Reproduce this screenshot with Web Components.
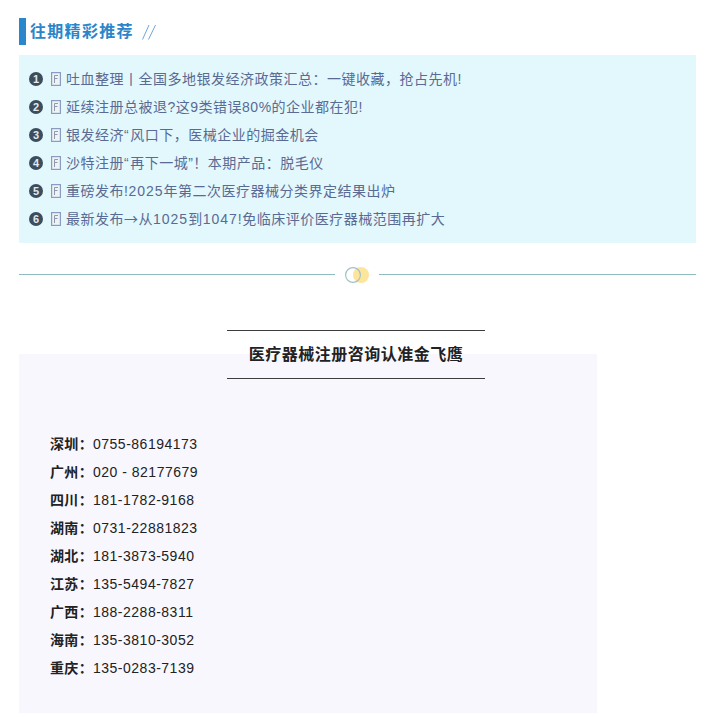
<!DOCTYPE html>
<html lang="zh">
<head>
<meta charset="utf-8">
<style>
  html, body { margin: 0; background: #fff; }
  body { font-family: "Liberation Sans", "Noto Sans CJK SC", sans-serif; }
  .arrow { font-family: "Noto Sans CJK SC", sans-serif; }
  .digits { letter-spacing: 1px; }
  .quote { letter-spacing: 1.5px; }
</style>
</head>
<body>
<page-root>
  <section-head>往期精彩推荐</section-head>
  <article-list>
    <article-row num="1">吐血整理丨全国多地银发经济政策汇总：一键收藏，抢占先机!</article-row>
    <article-row num="2">延续注册总被退?这9类错误80%的企业都在犯!</article-row>
    <article-row num="3">银发经济<span class="quote">“</span>风口下，医械企业的掘金机会</article-row>
    <article-row num="4">沙特注册<span class="quote">“</span>再下一城”！本期产品：脱毛仪</article-row>
    <article-row num="5">重磅发布!<span class="digits">2025</span>年第二次医疗器械分类界定结果出炉</article-row>
    <article-row num="6">最新发布<span class="arrow">→</span>从<span class="digits">1025</span>到<span class="digits">1047</span>!免临床评价医疗器械范围再扩大</article-row>
  </article-list>
  <ring-divider></ring-divider>
  <contact-title>医疗器械注册咨询认准金飞鹰</contact-title>
  <contact-card>
    <phone-row label="深圳">0755-86194173</phone-row>
    <phone-row label="广州">020 - 82177679</phone-row>
    <phone-row label="四川">181-1782-9168</phone-row>
    <phone-row label="湖南">0731-22881823</phone-row>
    <phone-row label="湖北">181-3873-5940</phone-row>
    <phone-row label="江苏">135-5494-7827</phone-row>
    <phone-row label="广西">188-2288-8311</phone-row>
    <phone-row label="海南">135-3810-3052</phone-row>
    <phone-row label="重庆">135-0283-7139</phone-row>
  </contact-card>
</page-root>
<script>
function shadow(el, html) {
  el.attachShadow({ mode: 'open' }).innerHTML = html
}

class PageRoot extends HTMLElement {
  constructor() {
    super()
    shadow(this, `<style>
      :host { display: block; width: 677px; height: 717px; padding: 18px 14px 0 19px; overflow: hidden; box-sizing: content-box; }
    </style><slot></slot>`)
  }
}

class SectionHead extends HTMLElement {
  constructor() {
    super()
    shadow(this, `<style>
      :host { display: flex; align-items: center; height: 27px; }
      .bar { width: 7px; height: 27px; background: #2b87cb; margin-right: 4px; }
      .title { font-size: 16px; font-weight: bold; color: #2b85c9; letter-spacing: 1.3px; padding-bottom: 4px; }
      svg { margin-left: 8px; display: block; }
    </style>
    <div class="bar"></div>
    <div class="title"><slot></slot></div>
    <svg width="14" height="16" viewBox="0 0 14 16" fill="none" stroke="#6ea6d8" stroke-width="1">
      <path d="M0.5 15.5 L7 1"/><path d="M6.5 15.5 L13.5 1"/>
    </svg>`)
  }
}

class ArticleList extends HTMLElement {
  constructor() {
    super()
    shadow(this, `<style>
      :host { display: block; margin-top: 10px; padding: 10px 0 10px 10px; background: #e3f8fc; }
    </style><slot></slot>`)
  }
}

class ArticleRow extends HTMLElement {
  constructor() {
    super()
    const num = this.getAttribute('num')
    shadow(this, `<style>
      :host { display: flex; align-items: center; height: 28px; color: #596a94; font-size: 14px; letter-spacing: 0.5px; }
      .num { width: 14px; height: 14px; border-radius: 50%; background: #3c4e5e; color: #e3e9ee; font-size: 11px; font-weight: bold; line-height: 14px; text-align: center; letter-spacing: 0; margin-right: 8px; }
      svg { display: block; margin-right: 5px; }
      .text { padding-bottom: 2px; }
    </style>
    <div class="num">${num}</div>
    <svg width="10" height="14" viewBox="0 0 10 14" fill="none">
      <rect x="0.6" y="0.6" width="8.8" height="12.8" fill="#eef3f8" stroke="#8a9cc0" stroke-width="1.2"/>
      <path d="M3.5 3.5H7M3.5 6.5H6.5M3.5 3.5V11" stroke="#8f9aa8"/>
    </svg>
    <div class="text"><slot></slot></div>`)
  }
}

class RingDivider extends HTMLElement {
  constructor() {
    super()
    shadow(this, `<style>
      :host { display: flex; align-items: center; margin-top: 23px; height: 17px; }
      .line { flex: 1; height: 1px; background: #8fbcc0; }
      .line.left { flex: none; width: 316px; }
      svg { display: block; margin: 0 10px; }
    </style>
    <div class="line left"></div>
    <svg width="24" height="16" viewBox="0 0 24 16" fill="none">
      <circle cx="16" cy="8" r="8" fill="#fde59c"/>
      <circle cx="8" cy="8" r="7.4" stroke="#a3c0c8" stroke-width="1.2"/>
    </svg>
    <div class="line"></div>`)
  }
}

class ContactTitle extends HTMLElement {
  constructor() {
    super()
    shadow(this, `<style>
      :host { display: block; position: relative; z-index: 1; box-sizing: border-box; width: 258px; height: 49px; margin: 47px 0 -25px 208px; border-top: 1px solid #3d3d3d; border-bottom: 1px solid #3d3d3d; color: #222; font-size: 16px; font-weight: bold; line-height: 47px; text-align: center; letter-spacing: 0.5px; }
    </style><slot></slot>`)
  }
}

class ContactCard extends HTMLElement {
  constructor() {
    super()
    shadow(this, `<style>
      :host { display: block; box-sizing: border-box; width: 578px; height: 359px; padding: 76px 0 0 31px; background: #f8f7fe; }
    </style><slot></slot>`)
  }
}

class PhoneRow extends HTMLElement {
  constructor() {
    super()
    const label = this.getAttribute('label')
    shadow(this, `<style>
      :host { display: block; height: 28px; line-height: 28px; font-size: 14px; color: #222; letter-spacing: 0.5px; white-space: pre; }
      b { letter-spacing: 0.33px; }
    </style><b>${label}：</b><slot></slot>`)
  }
}

customElements.define('page-root', PageRoot)
customElements.define('section-head', SectionHead)
customElements.define('article-list', ArticleList)
customElements.define('article-row', ArticleRow)
customElements.define('ring-divider', RingDivider)
customElements.define('contact-title', ContactTitle)
customElements.define('contact-card', ContactCard)
customElements.define('phone-row', PhoneRow)
</script>
</body>
</html>
